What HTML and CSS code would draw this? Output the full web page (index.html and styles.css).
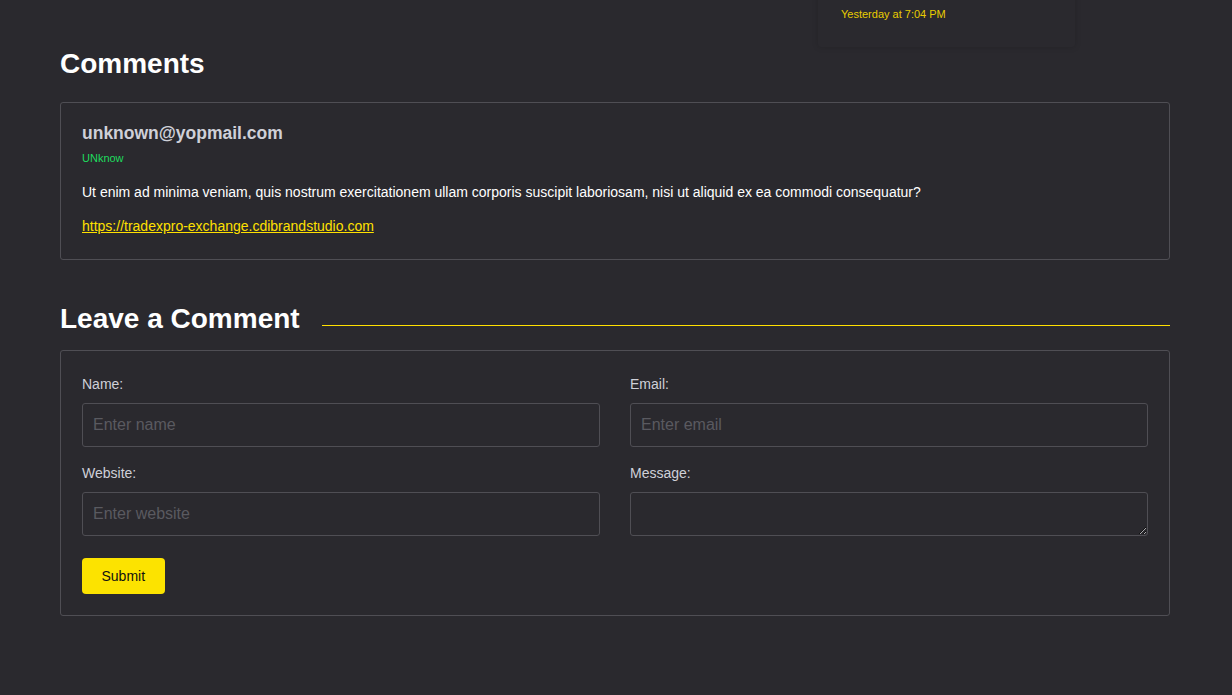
FILE: index.html
```html
<!DOCTYPE html>
<html lang="en">
<head>
<meta charset="utf-8">
<title>Comments</title>
<link rel="stylesheet" href="styles.css">
</head>
<body>
<div class="notice">
  <span class="notice-time">Yesterday at 7:04 PM</span>
</div>
<main class="wrap">
  <h2 class="title">Comments</h2>
  <div class="card comment">
    <h4 class="comment-name">unknown@yopmail.com</h4>
    <div class="comment-tag">UNknow</div>
    <p class="comment-text">Ut enim ad minima veniam, quis nostrum exercitationem ullam corporis suscipit laboriosam, nisi ut aliquid ex ea commodi consequatur?</p>
    <a class="comment-link" href="#">https://tradexpro-exchange.cdibrandstudio.com</a>
  </div>

  <div class="title-row">
    <h2 class="title">Leave a Comment</h2>
    <span class="title-line"></span>
  </div>
  <form class="card form">
    <div class="grid">
      <div class="field">
        <label class="label">Name:</label>
        <input class="input" type="text" placeholder="Enter name">
      </div>
      <div class="field">
        <label class="label">Email:</label>
        <input class="input" type="text" placeholder="Enter email">
      </div>
      <div class="field">
        <label class="label">Website:</label>
        <input class="input" type="text" placeholder="Enter website">
      </div>
      <div class="field">
        <label class="label">Message:</label>
        <textarea class="input textarea"></textarea>
      </div>
    </div>
    <button class="btn" type="button">Submit</button>
  </form>
</main>
</body>
</html>
```
FILE: styles.css
```css
* { box-sizing: border-box; }
html, body {
  margin: 0;
  background: #2a292e;
  font-family: "Liberation Sans", Arial, sans-serif;
  color: #ffffff;
}
body { position: relative; min-height: 695px; }

.notice {
  position: absolute;
  left: 818px;
  top: -10px;
  width: 257px;
  height: 57px;
  padding: 14px 0 0 23px;
  background: #2a292e;
  box-shadow: 0 0 6px rgba(0,0,0,0.16);
  border-radius: 3px;
}
.notice-time {
  font-size: 11px;
  color: #e8cc00;
}

.wrap {
  width: 1110px;
  margin-left: 60px;
  padding-top: 48px;
}
.title {
  margin: 0;
  font-size: 28px;
  font-weight: 700;
  line-height: 32px;
  color: #ffffff;
}
.card {
  border: 1px solid #4f4e54;
  border-radius: 3px;
}
.comment {
  margin-top: 22px;
  padding: 19px 20px 23px 21px;
}
.comment-name {
  margin: 0;
  font-size: 17.5px;
  line-height: 22px;
  font-weight: 700;
  color: #cfd0d8;
}
.comment-tag {
  margin-top: 7px;
  font-size: 11px;
  line-height: 14px;
  color: #1fdb5e;
}
.comment-text {
  margin: 17px 0 0;
  font-size: 14px;
  line-height: 20px;
  color: #ffffff;
}
.comment-link {
  display: inline-block;
  margin-top: 14px;
  font-size: 14px;
  line-height: 20px;
  color: #ffe000;
  text-decoration: underline;
}

.title-row {
  display: flex;
  align-items: center;
  gap: 22px;
  margin-top: 43px;
}
.title-line {
  flex: 1;
  height: 1px;
  background: #ffe000;
  margin-top: 12px;
}

.form {
  margin-top: 15px;
  padding: 21px 21px 21px 21px;
}
.grid {
  display: grid;
  grid-template-columns: 1fr 1fr;
  column-gap: 30px;
  row-gap: 14px;
}
.field {
  display: flex;
  flex-direction: column;
}
.label {
  font-size: 14px;
  line-height: 24px;
  margin-bottom: 7px;
  color: #cfd0d8;
}
.input {
  height: 44px;
  width: 100%;
  background: #2a292e;
  border: 1px solid #4f4e54;
  border-radius: 3px;
  padding: 0 10px;
  font-family: "Liberation Sans", Arial, sans-serif;
  font-size: 16px;
  color: #ffffff;
  outline: none;
}
.input::placeholder { color: #5a5a60; }
.textarea {
  display: block;
  resize: vertical;
  padding: 8px 10px;
}
.btn {
  margin-top: 22px;
  height: 36px;
  padding: 0 19.5px;
  background: #fce300;
  color: #111111;
  border: none;
  border-radius: 4px;
  font-family: "Liberation Sans", Arial, sans-serif;
  font-size: 14px;
}
```
